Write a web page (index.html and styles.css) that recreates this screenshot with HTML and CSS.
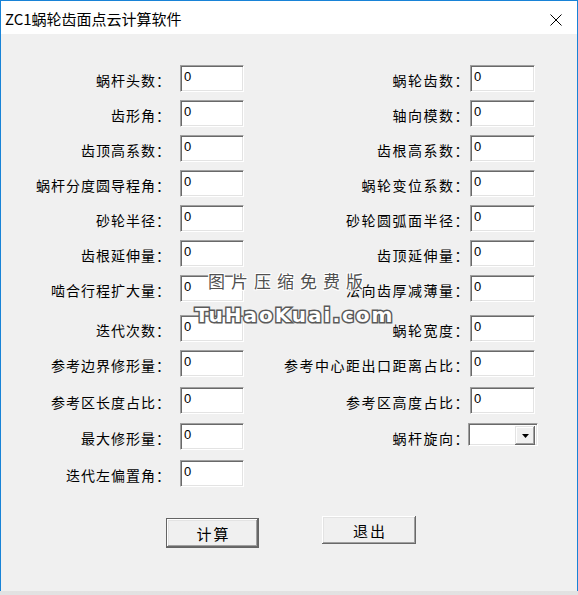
FILE: index.html
```
<!DOCTYPE html>
<html lang="zh-CN">
<head>
<meta charset="utf-8">
<title>ZC1蜗轮齿面点云计算软件</title>
<link rel="stylesheet" href="styles.css">
</head>
<body>
<div class="window">
  <div class="titlebar">
    <span class="title">ZC1蜗轮齿面点云计算软件</span>
    <svg class="close" width="12" height="12" viewBox="0 0 12 12"><path d="M0.5 0.5 L11.5 11.5 M11.5 0.5 L0.5 11.5" stroke="#000" stroke-width="1" fill="none"/></svg>
  </div>
  <div class="content">
    <div class="form">
      <label class="lbl l">蜗杆头数：</label><input class="field" value="0">
      <label class="lbl r">蜗轮齿数：</label><input class="field wide" value="0">

      <label class="lbl l">齿形角：</label><input class="field" value="0">
      <label class="lbl r">轴向模数：</label><input class="field wide" value="0">

      <label class="lbl l">齿顶高系数：</label><input class="field" value="0">
      <label class="lbl r">齿根高系数：</label><input class="field wide" value="0">

      <label class="lbl l">蜗杆分度圆导程角：</label><input class="field" value="0">
      <label class="lbl r">蜗轮变位系数：</label><input class="field wide" value="0">

      <label class="lbl l">砂轮半径：</label><input class="field" value="0">
      <label class="lbl r">砂轮圆弧面半径：</label><input class="field wide" value="0">

      <label class="lbl l">齿根延伸量：</label><input class="field" value="0">
      <label class="lbl r">齿顶延伸量：</label><input class="field wide" value="0">

      <label class="lbl l">啮合行程扩大量：</label><input class="field" value="0">
      <label class="lbl r">法向齿厚减薄量：</label><input class="field wide" value="0">

      <label class="lbl l">迭代次数：</label><input class="field" value="0">
      <label class="lbl r">蜗轮宽度：</label><input class="field wide" value="0">

      <label class="lbl l">参考边界修形量：</label><input class="field" value="0">
      <label class="lbl r">参考中心距出口距离占比：</label><input class="field wide" value="0">

      <label class="lbl l">参考区长度占比：</label><input class="field" value="0">
      <label class="lbl r">参考区高度占比：</label><input class="field wide" value="0">

      <label class="lbl l">最大修形量：</label><input class="field" value="0">
      <label class="lbl r">蜗杆旋向：</label>
      <div class="combo"><span class="combo-text"></span><span class="combo-btn"><svg width="7" height="4" viewBox="0 0 7 4"><path d="M0 0 H7 L3.5 4 Z" fill="#000"/></svg></span></div>

      <label class="lbl l">迭代左偏置角：</label><input class="field" value="0">
    </div>
    <div class="buttons">
      <button class="btn default">计算</button>
      <button class="btn">退出</button>
    </div>
  </div>
  <div class="watermark">
    <div class="wm-cn">图片压缩免费版</div>
    <div class="wm-en">TuHaoKuai.com</div>
  </div>
</div>
</body>
</html>
```
FILE: styles.css
```
* { box-sizing: border-box; }
html, body { margin: 0; padding: 0; }
body {
  width: 578px;
  height: 595px;
  overflow: hidden;
  background: linear-gradient(#c4c4c4, #e2e2e2);
  font-family: "Noto Sans CJK SC", sans-serif;
}
.window {
  width: 578px;
  height: 591px;
  border: 1px solid #1883d7;
  border-bottom: 0;
  background: #f0f0f0;
  position: relative;
}
.titlebar {
  height: 33px;
  background: #fff;
  display: flex;
  align-items: center;
  justify-content: space-between;
}
.title {
  font-size: 15px;
  line-height: 1;
  padding-left: 4px;
  padding-top: 2px;
  color: #000;
}
.close { margin-right: 15px; margin-top: 4px; }
.content { padding-top: 31px; }
.form {
  display: grid;
  grid-template-columns: 179px 64px 226px 66px;
  grid-template-rows: 35px 35px 35px 35px 35px 35px 40px 35px 37px 36px 37px 31px;
  align-items: start;
}
.lbl {
  height: 27px;
  display: flex;
  align-items: center;
  justify-content: flex-end;
  padding-top: 3px;
  font-size: 14px;
  letter-spacing: 1px;
  color: #000;
  white-space: nowrap;
}
.lbl.l { padding-right: 9px; }
.lbl.r { padding-right: 0; letter-spacing: 1.5px; }
.field {
  width: 64px;
  height: 27px;
  margin: 0;
  border: 1px solid;
  border-color: #a0a0a0 #fff #fff #a0a0a0;
  box-shadow: inset 1px 1px 0 #696969, inset -1px -1px 0 #e3e3e3;
  background: #fff;
  font-family: "Liberation Sans", sans-serif;
  font-size: 13px;
  color: #000;
  padding: 0 0 4px 3px;
  outline: none;
}
.field.wide { width: 65px; }
.combo {
  width: 70px;
  height: 23px;
  margin-left: -2px;
  border: 1px solid;
  border-color: #a0a0a0 #fff #fff #a0a0a0;
  box-shadow: inset 1px 1px 0 #696969, inset -1px -1px 0 #e3e3e3;
  background: #fff;
  display: flex;
  justify-content: flex-end;
  padding: 2px;
}
.combo-btn {
  width: 20px;
  height: 19px;
  background: #f0f0f0;
  box-shadow: inset -1px -1px 0 #696969, inset 1px 1px 0 #e3e3e3, inset -2px -2px 0 #a0a0a0, inset 2px 2px 0 #fff;
  display: flex;
  align-items: center;
  justify-content: center;
}
.buttons {
  display: flex;
  align-items: flex-start;
  gap: 63px;
  padding-left: 165px;
  padding-top: 25px;
}
.btn {
  width: 94px;
  height: 28px;
  margin: 0;
  border: 0;
  background: #f0f0f0;
  font-family: "Noto Sans CJK SC", sans-serif;
  font-size: 15px;
  letter-spacing: 2px;
  text-indent: 2px;
  color: #000;
  padding: 0;
  box-shadow: inset -1px -1px 0 #696969, inset 1px 1px 0 #fff, inset -2px -2px 0 #a0a0a0, inset 2px 2px 0 #e3e3e3;
}
.btn.default {
  height: 30px;
  margin-top: 2px;
  width: 93px;
  border: 1px solid #646464;
}
.watermark {
  position: absolute;
  left: 194px;
  top: 268px;
  width: 200px;
  pointer-events: none;
}
.wm-cn {
  font-size: 17px;
  letter-spacing: 6px;
  color: #505050;
  padding-left: 13px;
  line-height: 24px;
  text-shadow: -1px -1px 0 #fff, 1px -1px 0 #fff, -1px 1px 0 #fff, 1px 1px 0 #fff, 0 -1px 0 #fff, 0 1px 0 #fff;
}
.wm-en {
  margin-top: 11px;
  font-family: "DejaVu Sans", sans-serif;
  font-weight: bold;
  font-size: 20px;
  line-height: 22px;
  color: #fff;
  -webkit-text-stroke: 3px #5a5a5a;
  paint-order: stroke fill;
  letter-spacing: 2px;
}
```
